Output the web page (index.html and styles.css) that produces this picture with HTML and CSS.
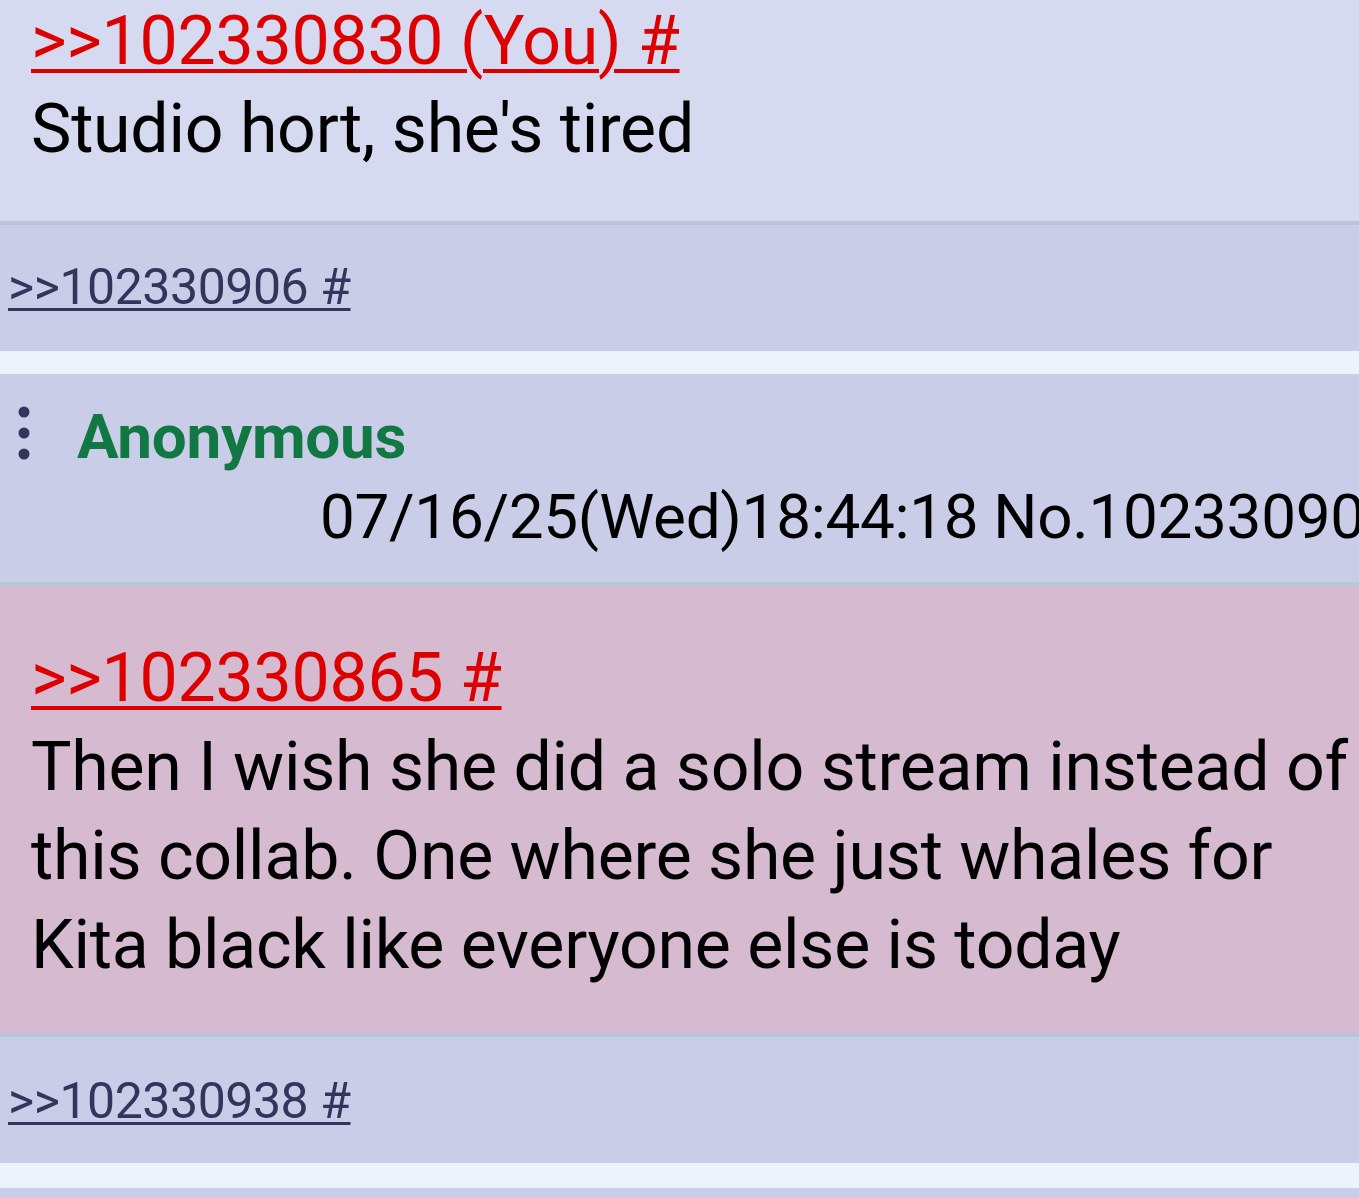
FILE: index.html
```html
<!DOCTYPE html>
<html>
<head>
<meta charset="utf-8">
<link rel="stylesheet" href="styles.css">
</head>
<body>
<div class="page">
  <div class="post post-top">
    <a class="quote-red" href="#">&gt;&gt;102330830 (You) #</a>
    <div class="msg">Studio hort, she's tired</div>
  </div>
  <div class="backlinks">
    <a class="quote-dark" href="#">&gt;&gt;102330906 #</a>
  </div>
  <div class="spacer"></div>
  <div class="post-head">
    <div class="name-row">
      <svg class="dots" width="14" height="54" viewBox="0 0 14 54"><circle cx="7" cy="6" r="5.5" fill="#34345c"/><circle cx="7" cy="27" r="5.5" fill="#34345c"/><circle cx="7" cy="48" r="5.5" fill="#34345c"/></svg>
      <span class="name">Anonymous</span>
    </div>
    <div class="date">07/16/25(Wed)18:44:18 No.102330906</div>
  </div>
  <div class="post post-hl">
    <a class="quote-red" href="#">&gt;&gt;102330865 #</a>
    <div class="msg">Then I wish she did a solo stream instead of this collab. One where she just whales for Kita black like everyone else is today</div>
  </div>
  <div class="backlinks backlinks-2">
    <a class="quote-dark" href="#">&gt;&gt;102330938 #</a>
  </div>
  <div class="spacer spacer-2"></div>
  <div class="next"></div>
</div>
</body>
</html>
```
FILE: styles.css
```css
html, body {
  margin: 0;
  padding: 0;
  background: #eef2fc;
}
body {
  font-family: Roboto, "Noto Sans", "Liberation Sans", sans-serif;
  width: 1359px;
  height: 1198px;
  overflow: hidden;
}
.page {
  display: flex;
  flex-direction: column;
}
.post {
  font-size: 68px;
  line-height: 88px;
  letter-spacing: -0.25px;
  padding: 0 0 0 31px;
  color: #000;
}
.post-top {
  background: #d6daf0;
  box-sizing: border-box;
  margin-top: -3px;
  height: 228px;
  border-bottom: 4px solid #b7c5d9;
}
.post-hl {
  background: #d6bad0;
  padding-top: 48px;
  line-height: 89px;
  height: 455px;
  box-sizing: border-box;
  border-top: 4px solid #b7c5d9;
  border-bottom: 4px solid #b7c5d9;
  padding-right: 0;
}
.quote-red {
  color: #dd0000;
  text-decoration: underline;
  text-decoration-thickness: 4px;
  text-underline-offset: 5px;
  display: block;
  width: max-content;
}
.msg {
  display: block;
}
.backlinks {
  background: #c9cde8;
  height: 126px;
  box-sizing: border-box;
  padding: 32px 0 0 8px;
  font-size: 50px;
  line-height: 60px;
  letter-spacing: -0.45px;
}
.backlinks-2 {
  padding-top: 34px;
}
.quote-dark {
  color: #34345c;
  text-decoration: underline;
  text-decoration-thickness: 3px;
  text-underline-offset: 4px;
}
.spacer {
  height: 23px;
  background: #eef2fc;
}
.spacer-2 {
  height: 25px;
}
.post-head {
  background: #c9cde8;
  height: 208px;
  box-sizing: border-box;
  padding-top: 26px;
}
.name-row {
  display: flex;
  align-items: flex-start;
  height: 78px;
}
.dots {
  margin: 6px 0 0 17px;
  flex: none;
}
.name {
  margin: -2px 0 0 46px;
  color: #117743;
  font-weight: 700;
  font-size: 62px;
  line-height: 78px;
  letter-spacing: -0.3px;
}
.date {
  margin-left: 320px;
  font-size: 62px;
  line-height: 78px;
  letter-spacing: -0.3px;
  white-space: nowrap;
  color: #000;
}
.next {
  background: #c9cde8;
  height: 40px;
}
```
